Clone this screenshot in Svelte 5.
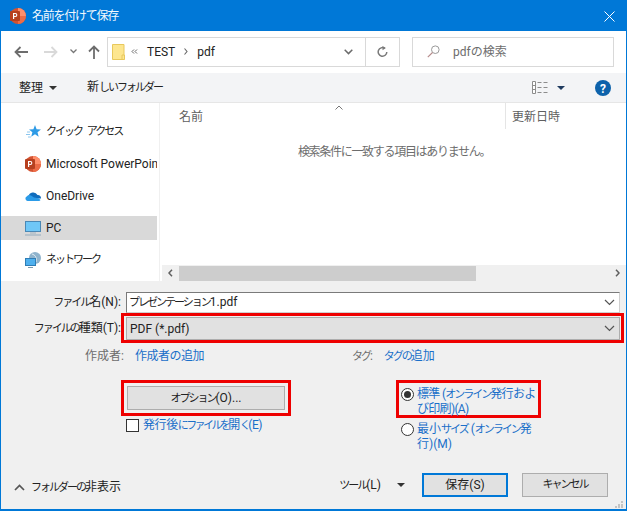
<script>
	const places = [
		{ name: 'クイック アクセス', icon: 'star', kana: true },
		{ name: 'Microsoft PowerPoint', icon: 'ppt' },
		{ name: 'OneDrive', icon: 'cloud' },
		{ name: 'PC', icon: 'pc', selected: true },
		{ name: 'ネットワーク', icon: 'net', kana: true }
	];
</script>

{#snippet pptIcon(size)}
	<svg width={size} height={size} viewBox="0 0 16 16">
		<circle cx="8" cy="8" r="8" fill="#d35230" />
		<path d="M8 0a8 8 0 0 1 8 8H8z" fill="#ff8f6b" />
		<path d="M8 8h8a8 8 0 0 1-8 8z" fill="#ed6c47" />
		<rect x="0" y="3" width="10" height="10" rx="1" fill="#b7401f" />
		<path d="M3 11V5h2.4a1.9 1.9 0 0 1 0 3.9H4.2V11z M4.2 6v1.9h1.1a.95.95 0 0 0 0-1.9z" fill="#fff" fill-rule="evenodd" />
	</svg>
{/snippet}

{#snippet chevron()}
	<svg class="chev" width="11" height="7" viewBox="0 0 11 7"><path d="M1 1l4.5 4.5L10 1" fill="none" stroke="#555" stroke-width="1.2" /></svg>
{/snippet}

<div class="win">
	<header class="title">
		{@render pptIcon(16)}
		<span class="title-text">名前を付けて保存</span>
		<svg class="close" width="11" height="11" viewBox="0 0 11 11"><path d="M.5.500l10 10M10.500.5l-10 10" stroke="#fff" stroke-width="1" /></svg>
	</header>

	<div class="nav">
		<svg class="arrow" width="14" height="12" viewBox="0 0 14 12"><path d="M6.500 1L1.500 6l5 5M2 6h12" fill="none" stroke="#6d6d6d" stroke-width="1.800" /></svg>
		<svg class="arrow fwd" width="14" height="12" viewBox="0 0 14 12"><path d="M7.500 1l5 5-5 5M12 6H0" fill="none" stroke="#d9d9d9" stroke-width="1.800" /></svg>
		<svg class="recent" width="7" height="5" viewBox="0 0 7 5"><path d="M.5.500L3.500 3.500 6.500.5" fill="none" stroke="#777" stroke-width="1.300" /></svg>
		<svg class="arrow up" width="12" height="14" viewBox="0 0 12 14"><path d="M1 6.500l5-5 5 5M6 2v12" fill="none" stroke="#6d6d6d" stroke-width="1.800" /></svg>

		<div class="address">
			<svg class="folder" width="13" height="16" viewBox="0 0 13 16"><path d="M.5.500h11.500v15H.5z" fill="#fde68f" stroke="#e8c85c" /><path d="M10 11h2.500v4.500H10z" fill="#fde68f" stroke="#e8c85c" /></svg>
			<svg class="crumb" width="7" height="5" viewBox="0 0 7 5"><path d="M3 .5L1 2.500l2 2M6 .5L4 2.500l2 2" fill="none" stroke="#666" /></svg>
			<span class="path first">TEST</span>
			<svg class="crumb sep" width="4" height="7" viewBox="0 0 4 7"><path d="M.5.500l2.500 3-2.500 3" fill="none" stroke="#666" stroke-width="1.100" /></svg>
			<span class="path">pdf</span>
			<span class="addr-drop">
				<svg width="9" height="6" viewBox="0 0 9 6"><path d="M.7.800l3.800 3.800L8.300.8" fill="none" stroke="#6b6b6b" stroke-width="1.500" /></svg>
			</span>
			<span class="refresh">
				<svg width="11" height="12" viewBox="0 0 11 12"><path d="M7.800 2.300A4.300 4.300 0 1 0 9.800 6" fill="none" stroke="#7a7a7a" stroke-width="1.500" /><path d="M5.500 0v4.200l3.400-2.100z" fill="#7a7a7a" /></svg>
			</span>
		</div>

		<div class="search">
			<svg width="13" height="13" viewBox="0 0 13 13"><circle cx="8.300" cy="4.700" r="3.800" fill="none" stroke="#9a9a9a" /><path d="M5.500 7.500L.8 12.200" stroke="#b58a8a" stroke-width="1.100" /></svg>
			<span>pdfの検索</span>
		</div>
	</div>

	<div class="toolbar">
		<span class="tool">整理</span>
		<span class="caret dark"></span>
		<span class="tool newfolder">新<span class="k">しいフォルダー</span></span>
		<svg class="views" width="16" height="13" viewBox="0 0 16 13">
			<path d="M.5.500h3v12h-3zM.5 4.500h3M.5 8.500h3" fill="#fff" stroke="#8c8c8c" />
			<path d="M5.500 1.500h4M11.500 1.500h4M5.500 6.500h4M11.500 6.500h4M5.500 11.500h4M11.500 11.500h4" stroke="#8c8c8c" />
		</svg>
		<span class="caret navy"></span>
		<svg class="help" width="16" height="16" viewBox="0 0 16 16">
			<circle cx="8" cy="8" r="8" fill="#0d62ab" />
			<text x="8" y="12.500" text-anchor="middle" class="q">?</text>
		</svg>
	</div>

	<div class="browser">
		<nav class="side">
			{#each places as p}
				<div class="place" class:selected={p.selected}>
					<span class="ico">
						{#if p.icon === 'star'}
							<svg width="16" height="16" viewBox="0 0 16 16">
								<path d="M10 1l1.600 4.300 4.400.2-3.500 2.800 1.200 4.400L10 10.200 6.200 12.700l1.200-4.400L4 5.500l4.400-.2z" fill="#2e9be6" />
								<path d="M2 8h3M1 10.500h4M3 13h3" stroke="#8cc6ee" stroke-width="1" />
							</svg>
						{:else if p.icon === 'ppt'}
							{@render pptIcon(16)}
						{:else if p.icon === 'cloud'}
							<svg width="16" height="16" viewBox="0 0 16 16">
								<path d="M3.500 8.500a4.800 4.800 0 0 1 9-1.500A3 3 0 0 1 16 10v.5H3z" fill="#0f6cbd" />
								<path d="M2.500 13A2.500 2.500 0 0 1 2 8.200a3 3 0 0 1 4-.7l3 2 4.500.7L15.500 12a2 2 0 0 1-1.500 1z" fill="#2b9be8" />
							</svg>
						{:else if p.icon === 'pc'}
							<svg width="16" height="16" viewBox="0 0 16 16">
								<rect x=".5" y="1.500" width="15" height="10" fill="#6fc7f7" stroke="#4a88b5" />
								<path d="M5 13h6" stroke="#9fb3c2" />
								<path d="M0 15h16" stroke="#9fb3c2" stroke-width="1.200" />
							</svg>
						{:else}
							<svg width="16" height="16" viewBox="0 0 16 16">
								<circle cx="10" cy="6" r="6" fill="#8fb3cc" />
								<path d="M7 2c3 1 5 3 4 8" fill="none" stroke="#e4eef5" />
								<rect x=".5" y="6.500" width="10" height="7" fill="#4eb0ee" stroke="#2f7db5" />
								<path d="M3 15.500h5" stroke="#7a99ad" />
							</svg>
						{/if}
					</span>
					<span class="place-name" class:k={p.kana}>{p.name}</span>
				</div>
			{/each}
		</nav>

		<section class="list">
			<div class="cols">
				<span class="col-name">名前</span>
				<svg class="sort" width="8" height="5" viewBox="0 0 8 5"><path d="M.5 4.500L4 1l3.500 3.500" fill="none" stroke="#777" /></svg>
				<span class="col-date">更新日時</span>
			</div>
			<p class="empty">検索条件に一致する項目はありません。</p>
			<div class="hscroll">
				<svg class="sb-arrow" width="5" height="8" viewBox="0 0 5 8"><path d="M4 .8L1 4l3 3.200" fill="none" stroke="#606060" stroke-width="1.500" /></svg>
				<span class="thumb"></span>
				<svg class="sb-arrow right" width="5" height="8" viewBox="0 0 5 8"><path d="M1 .8L4 4 1 7.200" fill="none" stroke="#606060" stroke-width="1.500" /></svg>
			</div>
		</section>
	</div>

	<div class="form">
		<div class="row name-row">
			<span class="lbl"><span class="k">ファイル</span>名(N):</span>
			<div class="field">
				<span><span class="k">プレゼンテーション</span>1.pdf</span>
				{@render chevron()}
			</div>
		</div>

		<div class="row type-row">
			<span class="lbl"><span class="k">ファイルの</span>種類(T):</span>
			<div class="hilite type-hilite">
				<div class="field grey">
					<span>PDF (*.pdf)</span>
					{@render chevron()}
				</div>
			</div>
		</div>

		<div class="meta">
			<span class="meta-key">作成者:</span>
			<span class="link author">作成者の追加</span>
			<span class="meta-key tag-key"><span class="k">タグ</span>:</span>
			<span class="link"><span class="k">タグの</span>追加</span>
		</div>

		<div class="opts">
			<div class="opts-left">
				<div class="hilite opt-hilite">
					<div class="btn option"><span><span class="k">オプション</span>(O)...</span></div>
				</div>
				<label class="check">
					<span class="box"></span>
					<span class="link">発行後<span class="k">にファイルを</span>開<span class="k">く</span>(E)</span>
				</label>
			</div>
			<div class="opts-right">
				<div class="hilite radio-hilite">
					<div class="radio-row">
						<span class="radio on"></span>
						<span class="link wrap tight">標準 (<span class="k">オンライン</span>発行およ<br />び印刷)(A)</span>
					</div>
				</div>
				<div class="radio-row second">
					<span class="radio"></span>
					<span class="link wrap">最小<span class="k">サイズ</span> (<span class="k">オンライン</span>発<br />行)(M)</span>
				</div>
			</div>
		</div>

		<div class="foot">
			<svg class="hide-ico" width="11" height="7" viewBox="0 0 11 7"><path d="M1 6l4.500-4.500L10 6" fill="none" stroke="#555" stroke-width="1.700" /></svg>
			<span class="hide-text"><span class="k">フォルダーの</span>非表示</span>
			<span class="tools"><span class="k">ツール</span>(L)</span>
			<span class="caret dark small"></span>
			<div class="btn save">保存(S)</div>
			<div class="btn cancel"><span class="k">キャンセル</span></div>
		</div>

		<svg class="grip" width="9" height="7" viewBox="0 0 9 7">
			<path d="M7 0h2v2H7zM4 3h2v2H4zM7 3h2v2H7zM1 5h2v2H1zM4 5h2v2H4zM7 5h2v2H7z" fill="#c4c4c4" />
		</svg>
	</div>
</div>

<style>
	:global(body) {
		margin: 0;
	}
	.win {
		width: 627px;
		height: 511px;
		box-sizing: border-box;
		border: 1px solid #0078d7;
		border-bottom-width: 2px;
		background: #f0f0f0;
		display: flex;
		flex-direction: column;
		overflow: hidden;
		font-family: Roboto, "Noto Sans CJK JP", sans-serif;
		font-size: 12px;
		line-height: 16px;
		color: #222;
	}
	/* kana runs in the original font are much narrower than Noto's */
	.k {
		font-size: 11px;
		letter-spacing: -2px;
		word-spacing: 4px;
	}
	.title {
		height: 30px;
		flex: none;
		background: #0078d7;
		color: #fff;
		display: flex;
		align-items: center;
		padding-left: 9px;
		padding-right: 11px;
	}
	.title-text {
		margin-left: 6px;
		color: #f2f8fd;
		letter-spacing: -1.250px;
	}
	.close {
		margin-left: auto;
	}

	.nav {
		height: 42px;
		flex: none;
		background: #fff;
		display: flex;
		align-items: center;
		padding-left: 13px;
		box-sizing: border-box;
		padding-bottom: 1px;
	}
	.fwd {
		margin-left: 16px;
	}
	.recent {
		margin-left: 12px;
	}
	.up {
		margin-left: 11px;
	}
	.address {
		margin-left: 7px;
		width: 293px;
		height: 30px;
		box-sizing: border-box;
		border: 1px solid #d9d9d9;
		display: flex;
		align-items: center;
		padding-left: 4px;
		color: #222;
	}
	.crumb {
		margin-left: 6px;
	}
	.path.first {
		margin-left: 9px;
	}
	.sep {
		margin-left: 9px;
	}
	.sep + .path {
		margin-left: 9px;
	}
	.addr-drop {
		margin-left: auto;
		width: 33px;
		height: 100%;
		display: flex;
		align-items: center;
		justify-content: center;
		border-right: 1px solid #d9d9d9;
	}
	.refresh {
		width: 33px;
		flex: none;
		display: flex;
		align-items: center;
		justify-content: center;
	}
	.search {
		margin-left: 12px;
		width: 202px;
		height: 30px;
		box-sizing: border-box;
		border: 1px solid #d9d9d9;
		display: flex;
		align-items: center;
		padding-left: 14px;
		gap: 13px;
		color: #6d6d6d;
	}

	.toolbar {
		height: 30px;
		flex: none;
		box-sizing: border-box;
		background: #f3f4f6;
		border-bottom: 1px solid #e6e6e6;
		display: flex;
		align-items: center;
		padding-left: 18px;
	}
	.caret {
		width: 0;
		height: 0;
		border-left: 4px solid transparent;
		border-right: 4px solid transparent;
		border-top: 4px solid #333;
		margin-left: 6px;
	}
	.caret.navy {
		border-top-color: #1f3a5f;
		margin-left: 9px;
	}
	.newfolder {
		margin-left: 30px;
	}
	.views {
		margin-left: auto;
	}
	.help {
		margin-left: 30px;
		margin-right: 15px;
	}
	.q {
		fill: #fff;
		font-size: 12px;
		font-weight: 700;
	}

	.browser {
		height: 178px;
		flex: none;
		display: flex;
		background: #fff;
	}
	.side {
		width: 156px;
		flex: none;
		box-sizing: border-box;
		padding-top: 17px;
		display: flex;
		flex-direction: column;
		gap: 8px;
		overflow: hidden;
	}
	.place {
		height: 24px;
		flex: none;
		display: flex;
		align-items: center;
		padding-left: 24px;
		gap: 5px;
		white-space: nowrap;
		overflow: hidden;
	}
	.place.selected {
		background: #d9d9d9;
	}
	.ico {
		width: 16px;
		height: 16px;
		display: block;
		flex: none;
	}
	.ico svg {
		display: block;
	}
	.list {
		flex: 1;
		min-width: 0;
		margin-left: 2px;
		border-left: 1px solid #f0f0f0;
		display: flex;
		flex-direction: column;
	}
	.cols {
		height: 26px;
		flex: none;
		display: flex;
		align-items: flex-start;
		color: #5f5f5f;
		padding-left: 19px;
		box-sizing: border-box;
	}
	.col-name {
		padding-top: 6px;
	}
	.sort {
		margin-left: 132px;
		margin-top: 2px;
	}
	.col-date {
		margin-left: 162px;
		border-left: 1px solid #e5e5e5;
		padding: 6px 0 0 6px;
		height: 26px;
		box-sizing: border-box;
	}
	.empty {
		margin: 15px 0 0;
		text-align: center;
		color: #6d6d6d;
		flex: 1;
		padding-left: 2px;
		letter-spacing: -1.300px;
	}
	.hscroll {
		height: 16px;
		flex: none;
		background: #f0f0f0;
		margin-left: 2px;
		display: flex;
		align-items: center;
		padding-left: 6px;
	}
	.thumb {
		width: 297px;
		height: 15px;
		margin-left: 6px;
		background: #cdcdcd;
	}
	.sb-arrow.right {
		margin-left: auto;
		margin-right: 6px;
	}

	.form {
		flex: 1;
		min-height: 0;
		display: flex;
		flex-direction: column;
		padding-top: 11px;
		position: relative;
	}
	.row {
		display: flex;
		align-items: center;
	}
	.lbl {
		width: 120px;
		text-align: right;
		flex: none;
		white-space: nowrap;
	}
	.name-row {
		height: 21px;
		margin-right: 6px;
	}
	.field {
		flex: 1;
		height: 100%;
		margin-left: 5px;
		box-sizing: border-box;
		display: flex;
		align-items: center;
		justify-content: space-between;
		padding: 0 4px 0 2px;
		background: #fff;
		border: 1px solid #7a7a7a;
		border-bottom-color: #d0d0d0;
		border-right-color: #d0d0d0;
	}
	.chev {
		flex: none;
	}
	.hilite {
		border: 3px solid #ee0000;
		box-sizing: border-box;
	}
	.type-row {
		height: 30px;
	}
	.type-hilite {
		flex: 1;
		height: 30px;
		margin-right: 2px;
		padding: 1px 1px 0 2px;
		display: flex;
	}
	.field.grey {
		margin-left: 0;
		padding-left: 3px;
		background: #e1e1e1;
		border: 1px solid #adadad;
	}
	.meta {
		display: flex;
		margin-top: 5px;
		padding-left: 84px;
		height: 16px;
		gap: 11px;
	}
	.meta-key {
		color: #6d6d6d;
	}
	.tag-key {
		margin-left: 137px;
	}
	.link {
		color: #1a6fc9;
	}
	.author {
		letter-spacing: -.5px;
	}
	.opts {
		display: flex;
		margin-top: 16px;
		padding-left: 120px;
	}
	.opts-left {
		width: 275px;
		flex: none;
	}
	.opt-hilite {
		width: 170px;
		height: 36px;
		padding: 3px;
		display: flex;
	}
	.btn {
		box-sizing: border-box;
		background: #e1e1e1;
		border: 1px solid #adadad;
		display: flex;
		align-items: center;
		justify-content: center;
	}
	.option {
		flex: 1;
	}
	.check {
		display: flex;
		align-items: center;
		margin-top: 1px;
		margin-left: 5px;
		gap: 4px;
		letter-spacing: -.4px;
	}
	.check .k {
		letter-spacing: -2.600px;
	}
	.box {
		width: 13px;
		height: 13px;
		box-sizing: border-box;
		background: #fff;
		border: 1px solid #333;
	}
	.opts-right {
		width: 146px;
	}
	.radio-hilite {
		height: 38px;
		width: 145px;
		padding: 4px 0 0 2px;
	}
	.radio-row {
		display: flex;
		align-items: flex-start;
		gap: 3px;
		white-space: nowrap;
	}
	.radio-row.second {
		margin-top: 4px;
		margin-left: 5px;
	}
	.radio {
		width: 13px;
		height: 13px;
		flex: none;
		box-sizing: border-box;
		margin-top: 1px;
		border: 1px solid #333;
		border-radius: 50%;
		background: #fff;
		position: relative;
	}
	.radio.on::after {
		content: "";
		position: absolute;
		left: 2px;
		top: 2px;
		width: 7px;
		height: 7px;
		border-radius: 50%;
		background: #333;
	}
	.wrap {
		line-height: 15px;
	}
	.tight {
		letter-spacing: -.7px;
	}
	.foot {
		margin-top: auto;
		height: 24px;
		margin-bottom: 12px;
		display: flex;
		align-items: center;
		padding-left: 13px;
	}
	.hide-ico {
		margin-top: 4px;
	}
	.hide-text {
		margin-left: 6px;
		margin-top: 4px;
	}
	.tools {
		margin-left: auto;
	}
	.caret.small {
		margin-left: 16px;
		margin-right: 17px;
	}
	.save {
		width: 86px;
		height: 24px;
		border: 2px solid #0078d7;
	}
	.cancel {
		width: 86px;
		height: 24px;
		margin-left: 14px;
		margin-right: 18px;
	}
	.grip {
		position: absolute;
		right: 3px;
		bottom: 1px;
	}
</style>
